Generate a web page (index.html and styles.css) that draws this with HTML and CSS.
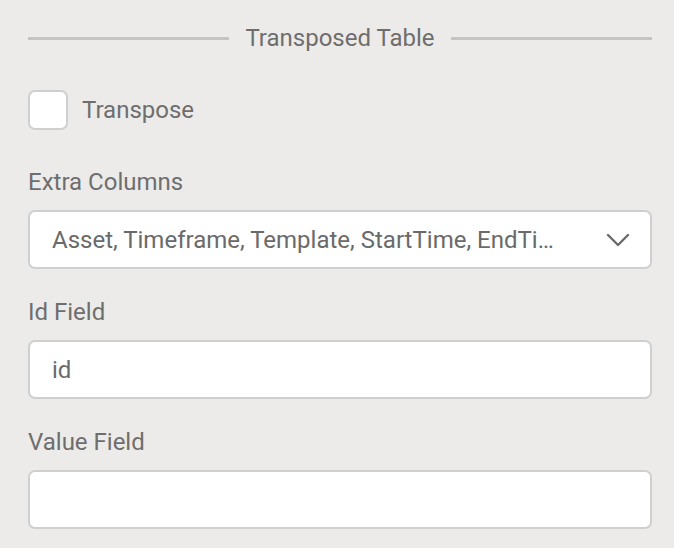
FILE: index.html
```html
<!DOCTYPE html>
<html lang="en">
<head>
  <meta charset="UTF-8" />
  <title>Transposed Table</title>
  <link rel="stylesheet" href="styles.css">
</head>
<body>
  <div class="panel">
    <div class="section-title">
      <span class="rule"></span>
      <span class="title-text">Transposed Table</span>
      <span class="rule"></span>
    </div>

    <label class="check-row">
      <span class="checkbox"></span>
      <span class="check-label">Transpose</span>
    </label>

    <div class="field">
      <div class="field-label">Extra Columns</div>
      <div class="select-box">
        <span class="select-text">Asset, Timeframe, Template, StartTime, EndTime, Duration</span>
        <svg class="chevron" width="24" height="14" viewBox="0 0 24 14">
          <path d="M2 2 L12 12 L22 2" fill="none" stroke="#6a6a6a" stroke-width="2.4" stroke-linecap="round" stroke-linejoin="round"/>
        </svg>
      </div>
    </div>

    <div class="field">
      <div class="field-label">Id Field</div>
      <div class="text-box">id</div>
    </div>

    <div class="field">
      <div class="field-label">Value Field</div>
      <div class="text-box"></div>
    </div>
  </div>
</body>
</html>
```

FILE: styles.css
```css
* {
  box-sizing: border-box;
}
body {
  margin: 0;
  background: #ecebe9;
  font-family: Roboto, "Liberation Sans", sans-serif;
  color: #6e6e6e;
}
.panel {
  padding: 22px 22px 0 28px;
}
.section-title {
  display: flex;
  align-items: center;
  gap: 16px;
  height: 32px;
}
.rule {
  flex: 1;
  height: 3px;
  background: #c4c4c4;
}
.title-text {
  font-size: 24px;
  line-height: 32px;
}
.check-row {
  display: flex;
  align-items: center;
  gap: 14px;
  margin-top: 36px;
  height: 40px;
}
.checkbox {
  width: 40px;
  height: 40px;
  background: #fff;
  border: 2px solid #cfcfcf;
  border-radius: 7px;
}
.check-label {
  font-size: 24px;
}
.field {
  margin-top: 36px;
}
.field + .field {
  margin-top: 27px;
}
.field-label {
  font-size: 24px;
  line-height: 32px;
  margin-bottom: 12px;
}
.select-box,
.text-box {
  height: 59px;
  background: #fff;
  border: 2px solid #cfcfcf;
  border-radius: 7px;
  display: flex;
  align-items: center;
  padding: 0 20px 0 22px;
  font-size: 24px;
  color: #6a6a6a;
}
.select-text {
  flex: 1;
  white-space: nowrap;
  overflow: hidden;
  text-overflow: ellipsis;
  margin-right: 44px;
}
.chevron {
  flex-shrink: 0;
}
```
